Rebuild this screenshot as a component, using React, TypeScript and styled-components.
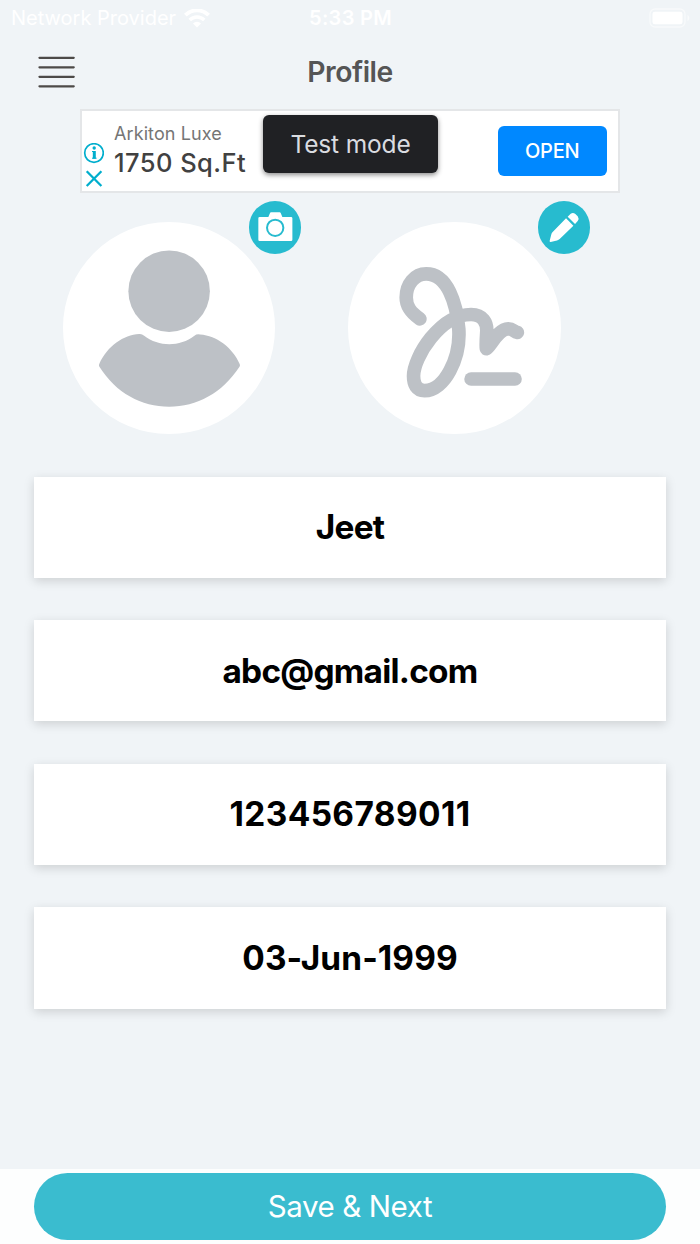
import React from "react";
import styled, { createGlobalStyle } from "styled-components";

const GlobalStyle = createGlobalStyle`
  * { box-sizing: border-box; }
  body { margin: 0; background: #f0f4f7; font-family: Inter, "Liberation Sans", sans-serif; }
  button { font-family: inherit; }
`;

const Screen = styled.div`
  width: 700px;
  height: 1244px;
  display: flex;
  flex-direction: column;
  background: #f0f4f7;
  overflow: hidden;
`;

const Label = styled.span<{ $size: number; $weight?: number; $color: string; $track?: number; $line?: number }>`
  font-size: ${(p) => p.$size}px;
  font-weight: ${(p) => p.$weight ?? 400};
  color: ${(p) => p.$color};
  letter-spacing: ${(p) => p.$track ?? 0}px;
  line-height: ${(p) => p.$line ?? 36}px;
  white-space: nowrap;
`;

const StatusBar = styled.div`
  height: 36px;
  flex: none;
  display: grid;
  grid-template-columns: 1fr auto 1fr;
  align-items: center;
  padding: 0 10px 0 11px;
`;

const Carrier = styled.div`
  display: flex;
  align-items: center;
  gap: 8px;
`;

const BatteryIcon = styled.svg`
  justify-self: end;
  display: block;
`;

const Header = styled.header`
  height: 73px;
  flex: none;
  display: grid;
  grid-template-columns: 37px 1fr 37px;
  align-items: center;
  justify-items: center;
  padding: 0 38px 2px;
`;

const MenuButton = styled.button`
  width: 37px;
  height: 32px;
  border: 0;
  padding: 0;
  background: none;
  display: block;
`;

const AdBanner = styled.section`
  width: 540px;
  height: 84px;
  flex: none;
  margin: 0 auto;
  border: 2px solid #e4e6e8;
  background: #fff;
  display: flex;
  position: relative;
`;

const AdMarks = styled.div`
  width: 24px;
  padding: 32px 0 0 1px;
`;

const AdCopy = styled.div`
  flex: 1;
  display: flex;
  flex-direction: column;
  padding: 10px 0 0 8px;
`;

const OpenButton = styled.button`
  width: 109.5px;
  height: 49.5px;
  margin: 15px 11px 0 0;
  border: 0;
  border-radius: 6px;
  background: #0088ff;
  padding: 0;
`;

const TestToast = styled.div`
  position: absolute;
  left: 181px;
  top: 4px;
  width: 175px;
  height: 57.5px;
  border-radius: 6px;
  background: #202124;
  box-shadow: 0 2px 5px rgba(0, 0, 0, 0.45);
  display: flex;
  align-items: center;
  justify-content: center;
`;

const Portraits = styled.section`
  flex: none;
  height: 283.7px;
  display: flex;
  gap: 72.8px;
  padding: 28.5px 0 0 62.9px;
`;

const Portrait = styled.div`
  width: 212.6px;
  height: 212.6px;
  border-radius: 50%;
  background: #fff;
  position: relative;
`;

const Badge = styled.button<{ $left: number }>`
  position: absolute;
  left: ${(p) => p.$left}px;
  top: -20.4px;
  width: 52.4px;
  height: 52.4px;
  padding: 0;
  border: 0;
  border-radius: 50%;
  background: #27bbcf;
`;

const Drawing = styled.svg`
  display: block;
  width: 100%;
  height: 100%;
`;

const Fields = styled.main`
  flex: 1;
  display: flex;
  flex-direction: column;
  gap: 42.4px;
  padding: 0 34px;
`;

const Field = styled.div`
  height: 101.2px;
  flex: none;
  background: #fff;
  box-shadow: 0 3px 10px rgba(0, 0, 0, 0.15);
  display: flex;
  align-items: center;
  justify-content: center;
`;

const Footer = styled.footer`
  height: 75px;
  flex: none;
  background: #fdfefe;
  padding: 4px 34px 0;
`;

const SaveButton = styled.button`
  width: 100%;
  height: 67px;
  border: 0;
  border-radius: 34px;
  background: #3abccf;
  padding: 0 0 1px;
`;

const fields = [
  { value: "Jeet", track: -0.7 },
  { value: "abc@gmail.com", track: -0.75 },
  { value: "123456789011", track: 0.4 },
  { value: "03-Jun-1999", track: 0.1 },
];

export default function App() {
  return (
    <Screen>
      <GlobalStyle />
      <StatusBar>
        <Carrier>
          <Label $size={20} $color="#fff" $track={0}>Network Provider</Label>
          <svg width="26" height="19" viewBox="0 0 26 19" fill="none" stroke="#fff">
            <path d="M1.4 6.2a16.4 16.4 0 0 1 23.2 0" strokeWidth="3.9" />
            <path d="M5.7 11a10.3 10.3 0 0 1 14.6 0" strokeWidth="3.4" />
            <path d="M13 18.5 9 14.4a5.8 5.8 0 0 1 8 0Z" fill="#fff" stroke="none" />
          </svg>
        </Carrier>
        <Label $size={20} $weight={600} $color="#fff" $track={0.3}>5:33 PM</Label>
        <BatteryIcon width="41" height="20" viewBox="0 0 41 20">
          <rect x="1" y="1" width="35" height="18" rx="5" fill="none" stroke="#fff" strokeOpacity=".5" strokeWidth="1.4" />
          <rect x="3.5" y="3.7" width="30" height="12.6" rx="2.3" fill="#fff" />
          <path d="M38.5 7c2.4 1 2.4 5 0 6z" fill="#fff" fillOpacity=".6" />
        </BatteryIcon>
      </StatusBar>

      <Header>
        <MenuButton aria-label="Menu">
          <Drawing viewBox="0 0 37 32" stroke="#4d4a48" strokeWidth="2.3" strokeLinecap="round">
            <path d="M1.5 1.8h34.2M1.5 11.3h34.2M1.5 20.8h34.2M1.5 30.3h34.2" />
          </Drawing>
        </MenuButton>
        <Label $size={28.3} $weight={600} $color="#555" $track={-0.45} $line={38}>Profile</Label>
      </Header>

      <AdBanner>
        <AdMarks>
          <svg width="21" height="46" viewBox="0 0 21 46" fill="none" stroke="#00aecd" strokeWidth="1.7">
            <circle cx="11" cy="10" r="9.3" />
            <path d="M9 8.5h2.6M9 15.2h4.6" strokeWidth="1" />
            <path d="M11.3 8v7.7" strokeWidth="3" />
            <circle cx="11.2" cy="5" r="1.7" fill="#00aecd" stroke="none" />
            <path d="m3.7 28.3 14.7 14.7m0-14.7L3.7 43" strokeWidth="2.3" />
          </svg>
        </AdMarks>
        <AdCopy>
          <Label $size={18} $color="#757575" $track={0.1} $line={26}>Arkiton Luxe</Label>
          <Label $size={25.5} $weight={500} $color="#414141" $track={0.45} $line={32}>1750 Sq.Ft</Label>
        </AdCopy>
        <OpenButton>
          <Label $size={20} $weight={500} $color="#fff" $track={-0.2}>OPEN</Label>
        </OpenButton>
        <TestToast>
          <Label $size={24.5} $color="#dadce0" $track={-0.15}>Test mode</Label>
        </TestToast>
      </AdBanner>

      <Portraits>
        <Portrait>
          <Drawing viewBox="38 79 639 639" fill="#bdc1c6">
            <circle cx="357" cy="287" r="122.5" />
            <path d="M147 513Q145 510 147 506C172 451 220 419 267 416Q275 415 282 421C326 455 389 455 433 421Q440 415 450 417C500 421 548 456 569 506Q571 510 569 513C517 593 440 634 357 634S197 593 147 513Z" />
          </Drawing>
          <Badge $left={185.9} aria-label="Change photo">
            <Drawing viewBox="596 18 157 157" fill="#fff">
              <path d="M628 66h26l5-12q1-2 3-2h26q2 0 3 2l5 12h26q4 0 4 4v64q0 4-4 4h-94q-4 0-4-4V70q0-4 4-4Z" />
              <circle cx="674.5" cy="98.5" r="24.5" stroke="#27bbcf" strokeWidth="6" />
            </Drawing>
          </Badge>
        </Portrait>
        <Portrait>
          <Drawing viewBox="25 79 639 639" fill="none" stroke="#bdc1c6" strokeWidth="41" strokeLinecap="round" strokeLinejoin="round">
            <path d="M241 370C212 350 200 332 200 306C200 266 226 235 260 235C325 235 351 325 358 400C364 488 315 586 255 586C231 586 222 567 222 542C222 485 302 357 395 357C430 357 444 381 442 410C440 440 440 455 441 460C453 454 475 401 507 400C520 400 525 409 534 411" />
            <path d="M395 551H527" />
          </Drawing>
          <Badge $left={189.4} aria-label="Edit signature">
            <Drawing viewBox="593 18 157 157" fill="#fff">
              <path d="m677 70 22 22-41 40q-3 3-8 4l-19 5q-4 0-3-4l5-19q1-4 4-7Z" />
              <path d="m682 65 9-9q7-5 14 1l7 7q5 7 0 14l-8 9Z" />
            </Drawing>
          </Badge>
        </Portrait>
      </Portraits>

      <Fields>
        {fields.map((field) => (
          <Field key={field.value}>
            <Label $size={33.4} $weight={700} $color="#000" $track={field.track}>{field.value}</Label>
          </Field>
        ))}
      </Fields>

      <Footer>
        <SaveButton>
          <Label $size={29.5} $color="#fff" $track={-0.4}>Save &amp; Next</Label>
        </SaveButton>
      </Footer>
    </Screen>
  );
}
